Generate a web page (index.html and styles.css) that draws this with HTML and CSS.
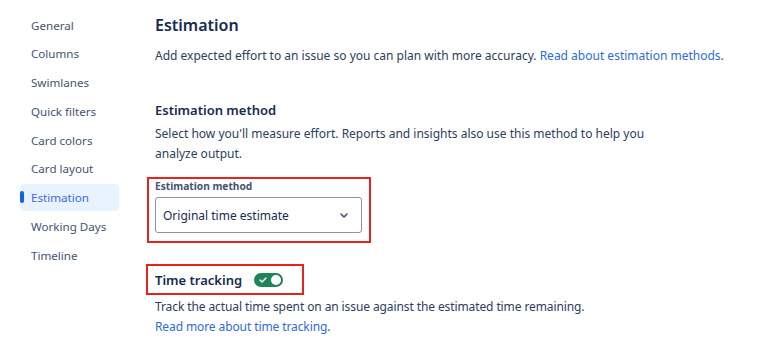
FILE: index.html
```html
<!DOCTYPE html>
<html lang="en">
<head>
<meta charset="utf-8">
<title>Estimation settings</title>
<link rel="stylesheet" href="styles.css">
</head>
<body>
<div class="page">
  <nav class="nav">
    <a class="nav-item">General</a>
    <a class="nav-item">Columns</a>
    <a class="nav-item">Swimlanes</a>
    <a class="nav-item">Quick filters</a>
    <a class="nav-item">Card colors</a>
    <a class="nav-item">Card layout</a>
    <a class="nav-item active">Estimation</a>
    <a class="nav-item">Working Days</a>
    <a class="nav-item">Timeline</a>
  </nav>
  <main class="main">
    <h1 class="title">Estimation</h1>
    <p class="lead">Add expected effort to an issue so you can plan with more accuracy. <a class="link">Read about estimation methods</a>.</p>
    <h2 class="subtitle">Estimation method</h2>
    <p class="desc">Select how you'll measure effort. Reports and insights also use this method to help you analyze output.</p>
    <div class="highlight field">
      <label class="field-label">Estimation method</label>
      <div class="select">
        <span>Original time estimate</span>
        <svg class="chevron" width="8" height="5" viewBox="0 0 8 5"><path d="M1 1l3 3 3-3" fill="none" stroke="#44546F" stroke-width="1.6" stroke-linecap="round" stroke-linejoin="round"/></svg>
      </div>
    </div>
    <div class="highlight tracking">
      <span class="tracking-title">Time tracking</span>
      <span class="toggle">
        <svg class="check" width="8" height="6" viewBox="0 0 8 6"><path d="M1 3l2 2 4-4" fill="none" stroke="#fff" stroke-width="1.4" stroke-linecap="round" stroke-linejoin="round"/></svg>
        <span class="knob"></span>
      </span>
    </div>
    <p class="track-desc">Track the actual time spent on an issue against the estimated time remaining.<br><a class="link">Read more about time tracking</a>.</p>
  </main>
</div>
</body>
</html>
```
FILE: styles.css
```css
html, body {
  margin: 0;
  padding: 0;
  background: #ffffff;
}
body {
  font-family: "Noto Sans", "Open Sans", sans-serif;
  font-size: 12px;
  color: #2C3E5D;
}
.page {
  display: flex;
  align-items: flex-start;
}
.nav {
  display: flex;
  flex-direction: column;
  gap: 1.75px;
  width: 99px;
  margin-left: 20px;
  padding-top: 11.5px;
}
.nav-item {
  position: relative;
  display: block;
  height: 27px;
  line-height: 27px;
  padding-left: 11px;
  border-radius: 4px;
  color: #44546F;
  font-size: 11.6px;
  white-space: nowrap;
}
.nav-item.active {
  background: #E9F2FF;
  color: #3D6BE0;
}
.nav-item.active::before {
  content: "";
  position: absolute;
  left: 0;
  top: 7px;
  width: 3.5px;
  height: 12px;
  border-radius: 2px;
  background: #0C66E4;
}
.main {
  margin-left: 36px;
  display: flex;
  flex-direction: column;
  align-items: flex-start;
}
.title {
  margin: 13px 0 0;
  font-size: 16px;
  line-height: 24px;
  font-weight: 600;
  color: #172B4D;
}
.lead {
  margin: 9px 0 0;
  line-height: 20px;
}
.link {
  color: #2F6BDB;
}
.subtitle {
  margin: 34px 0 0;
  font-size: 13px;
  line-height: 20px;
  font-weight: 600;
  color: #172B4D;
}
.desc {
  margin: 4px 0 0;
  max-width: 500px;
  line-height: 20px;
}
.highlight {
  border: 2px solid #E8231D;
}
.field {
  margin: 13px 0 0 -8px;
  padding: 0 7px 8px 6px;
  display: flex;
  flex-direction: column;
  gap: 4px;
}
.field-label {
  font-size: 10.2px;
  line-height: 14px;
  font-weight: 700;
  color: #44546F;
}
.select {
  box-sizing: border-box;
  width: 207px;
  height: 36px;
  display: flex;
  align-items: center;
  justify-content: space-between;
  padding: 0 13px 0 7px;
  border: 1px solid #8C929E;
  border-radius: 3px;
  font-size: 12px;
  color: #172B4D;
}
.tracking {
  margin: 21px 0 0 -9px;
  padding: 0 19px 0 7px;
  height: 27px;
  display: flex;
  align-items: center;
  gap: 12px;
}
.tracking-title {
  font-size: 13px;
  font-weight: 600;
  color: #172B4D;
}
.toggle {
  box-sizing: border-box;
  width: 29px;
  height: 14px;
  border-radius: 7px;
  background: #1F845A;
  display: flex;
  align-items: center;
  justify-content: space-between;
  padding: 0 2px 0 5px;
}
.knob {
  width: 10px;
  height: 10px;
  border-radius: 50%;
  background: #ffffff;
}
.track-desc {
  margin: 2px 0 0;
  line-height: 19.5px;
  letter-spacing: -0.1px;
}
```
